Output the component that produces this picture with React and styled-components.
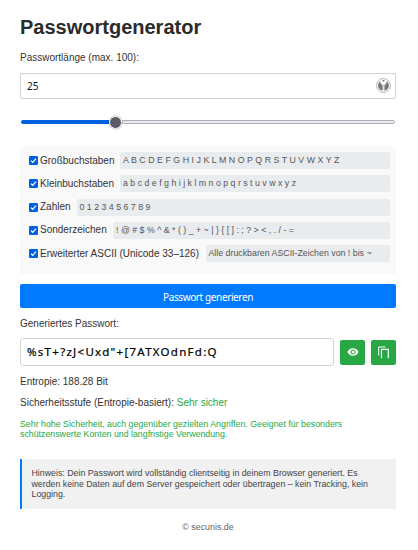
import React from "react";
import styled, { createGlobalStyle } from "styled-components";

const GlobalStyle = createGlobalStyle`
  * { box-sizing: border-box; }
  body {
    margin: 0;
    background: #fff;
    color: #333;
    font: 10px/12px Arial, "Liberation Sans", sans-serif;
  }
`;

const Page = styled.main`
  width: 418px;
  height: 550px;
  padding: 15px 22px 0 20px;
  display: flex;
  flex-direction: column;
  overflow: hidden;
`;

const Title = styled.h1`
  margin: 0;
  font-size: 20px;
  line-height: 24px;
  color: #2b2b2b;
`;

const Line = styled.div`
  margin-top: ${(p) => p.$gap}px;
  height: 12px;
  white-space: nowrap;
`;

const Good = styled.span`
  color: #28a745;
`;

const LengthField = styled.div`
  margin-top: 9px;
  height: 26px;
  padding: 0 4px 1px 6px;
  display: flex;
  align-items: center;
  justify-content: space-between;
  border: 1px solid #d3d3d3;
  border-radius: 2px;
  font: 10px/14px "Noto Sans", sans-serif;
  color: #111;
`;

const Slider = styled.div`
  margin: 16px 1px 0;
  height: 14px;
  display: flex;
  align-items: center;
`;

const Filled = styled.div`
  width: 88px;
  height: 4px;
  border-radius: 2px 0 0 2px;
  background: #0060df;
`;

const Thumb = styled.div`
  flex: none;
  width: 13px;
  height: 13px;
  border: 1.5px solid #fff;
  border-radius: 50%;
  background: #5b5b66;
  box-shadow: 0 0 1.5px rgba(0, 0, 0, 0.5);
`;

const Rest = styled.div`
  flex: 1;
  height: 4px;
  border: 1px solid #b0b0b9;
  border-radius: 0 2px 2px 0;
  background: #e9e9ed;
`;

const Options = styled.section`
  margin-top: 17px;
  height: 128px;
  padding: 6px 6px 0 9px;
  display: flex;
  flex-direction: column;
  gap: 6.25px;
  border-radius: 2px;
  background: #f9f9f9;
`;

const Option = styled.div`
  height: 17px;
  display: flex;
  align-items: center;
`;

const OptionLabel = styled.label`
  flex: none;
  width: ${(p) => p.$width}px;
  padding-left: 2px;
  white-space: nowrap;
`;

const Charset = styled.span`
  flex: 1;
  height: 17px;
  padding-left: 3px;
  border-radius: 2px;
  background: #e9ecef;
  color: #555;
  font-size: 8.8px;
  line-height: 17px;
  white-space: nowrap;
  letter-spacing: ${(p) => p.$track || 0}px;
`;

const Generate = styled.button`
  margin-top: 10px;
  height: 24px;
  flex: none;
  padding: 1px 0 0;
  border: 0;
  border-radius: 2px;
  background: #007bff;
  color: #fff;
  font: 10px/24px "Noto Sans", sans-serif;
  letter-spacing: -0.38px;
`;

const Result = styled.div`
  margin-top: 8px;
  height: 28px;
  display: flex;
  align-items: center;
`;

const Password = styled.div`
  width: 314px;
  height: 28px;
  margin-right: 6px;
  padding-left: 6px;
  border: 1px solid #d3d3d3;
  border-radius: 3px;
  color: #000;
  font: 11.5px/26px "Noto Sans", sans-serif;
  letter-spacing: 1.28px;
  -webkit-text-stroke: 0.2px #000;
  white-space: nowrap;
`;

const IconButton = styled.button`
  width: 25px;
  height: 25px;
  margin-right: 6px;
  padding: 0;
  display: grid;
  place-items: center;
  border: 0;
  border-radius: 2px;
  background: #28a745;
  color: #fff;
  &:last-child { margin-right: 0; }
`;

const Verdict = styled.p`
  margin: 9.500px 0 0;
  color: #28a745;
  font-size: 8.8px;
  line-height: 10.7px;
  white-space: nowrap;
`;

const Note = styled.aside`
  margin-top: 19px;
  height: 50px;
  padding: 9px 0 0 9.5px;
  border-left: 2.5px solid #007bff;
  background: #f1f1f1;
  color: #444;
  font-size: 8.8px;
  line-height: 10.7px;
  white-space: nowrap;
`;

const Footer = styled.footer`
  margin-top: 12px;
  text-align: center;
  color: #666;
  font-size: 8.9px;
  line-height: 12px;
`;

const Check = () => (
  <svg width="9" height="9" viewBox="0 0 9 9">
    <rect width="9" height="9" rx="1.2" fill="#0060df" />
    <path d="M2 4.6 3.7 6.3 7 2.7" fill="none" stroke="#fff" strokeWidth="1.2" />
  </svg>
);

const KeyBadge = () => (
  <svg width="15" height="15" viewBox="0 0 15 15">
    <circle cx="7.5" cy="7.5" r="6.9" fill="#fff" stroke="#aaa" strokeWidth="0.9" />
    <path d="M4.200 3.200C1.500 5.100 1.300 10 4.700 12L6.600 12.800V7.100C5.200 6.300 4.300 5 4.200 3.200Z" fill="#777" />
    <path d="M10.800 3.200C13.500 5.100 13.700 10 10.300 12L8.400 12.800V7.100C9.800 6.300 10.700 5 10.800 3.200Z" fill="#777" />
    <path d="M6.300 2.100h2.400L7.500 4Z" fill="#777" />
    <path d="M7.500 6v6.500" stroke="#ccc" strokeWidth="0.6" />
  </svg>
);

const Eye = () => (
  <svg width="12" height="12" viewBox="0 0 24 24" fill="currentColor">
    <path d="M12 4.5C7 4.5 2.7 7.6 1 12c1.7 4.4 6 7.5 11 7.5s9.300-3.100 11-7.500c-1.700-4.400-6-7.500-11-7.500Zm0 12.500a5 5 0 1 1 0-10 5 5 0 0 1 0 10Zm0-8a3 3 0 1 0 0 6 3 3 0 0 0 0-6Z" />
  </svg>
);

const Copy = () => (
  <svg width="13" height="13" viewBox="0 0 13 13" fill="none" stroke="currentColor">
    <path d="M1.700 9.500V1H8.500" strokeWidth="1" />
    <path d="M4.500 12.300V3.300H11.300v9" strokeWidth="1.200" />
  </svg>
);

const options = [
  { label: "Großbuchstaben", width: 82, chars: "A B C D E F G H I J K L M N O P Q R S T U V W X Y Z", track: 0.04 },
  { label: "Kleinbuchstaben", width: 82, chars: "a b c d e f g h i j k l m n o p q r s t u v w x y z" },
  { label: "Zahlen", width: 38.5, chars: "0 1 2 3 4 5 6 7 8 9" },
  { label: "Sonderzeichen", width: 75, chars: "! @ # $ % ^ & * ( ) _ + ~ | } { [ ] : ; ? > < , . / - =" },
  { label: "Erweiterter ASCII (Unicode 33–126)", width: 167.5, chars: "Alle druckbaren ASCII-Zeichen von ! bis ~" },
];

export default function App() {
  return (
    <>
      <GlobalStyle />
      <Page>
        <Title>Passwortgenerator</Title>
        <Line $gap={13}>Passwortlänge (max. 100):</Line>
        <LengthField>
          25
          <KeyBadge />
        </LengthField>
        <Slider>
          <Filled />
          <Thumb />
          <Rest />
        </Slider>
        <Options>
          {options.map((o) => (
            <Option key={o.label}>
              <Check />
              <OptionLabel $width={o.width}>{o.label}</OptionLabel>
              <Charset $track={o.track}>{o.chars}</Charset>
            </Option>
          ))}
        </Options>
        <Generate>Passwort generieren</Generate>
        <Line $gap={10}>Generiertes Passwort:</Line>
        <Result>
          <Password>{'%sT+?zJ<Uxd"+[7ATXOdnFd:Q'}</Password>
          <IconButton aria-label="Anzeigen"><Eye /></IconButton>
          <IconButton aria-label="Kopieren"><Copy /></IconButton>
        </Result>
        <Line $gap={10}>Entropie: 188.28 Bit</Line>
        <Line $gap={9}>
          Sicherheitsstufe (Entropie-basiert): <Good>Sehr sicher</Good>
        </Line>
        <Verdict>
          Sehr hohe Sicherheit, auch gegenüber gezielten Angriffen. Geeignet für besonders
          <br />
          schützenswerte Konten und langfristige Verwendung.
        </Verdict>
        <Note>
          Hinweis: Dein Passwort wird vollständig clientseitig in deinem Browser generiert. Es
          <br />
          werden keine Daten auf dem Server gespeichert oder übertragen – kein Tracking, kein
          <br />
          Logging.
        </Note>
        <Footer>© secunis.de</Footer>
      </Page>
    </>
  );
}
